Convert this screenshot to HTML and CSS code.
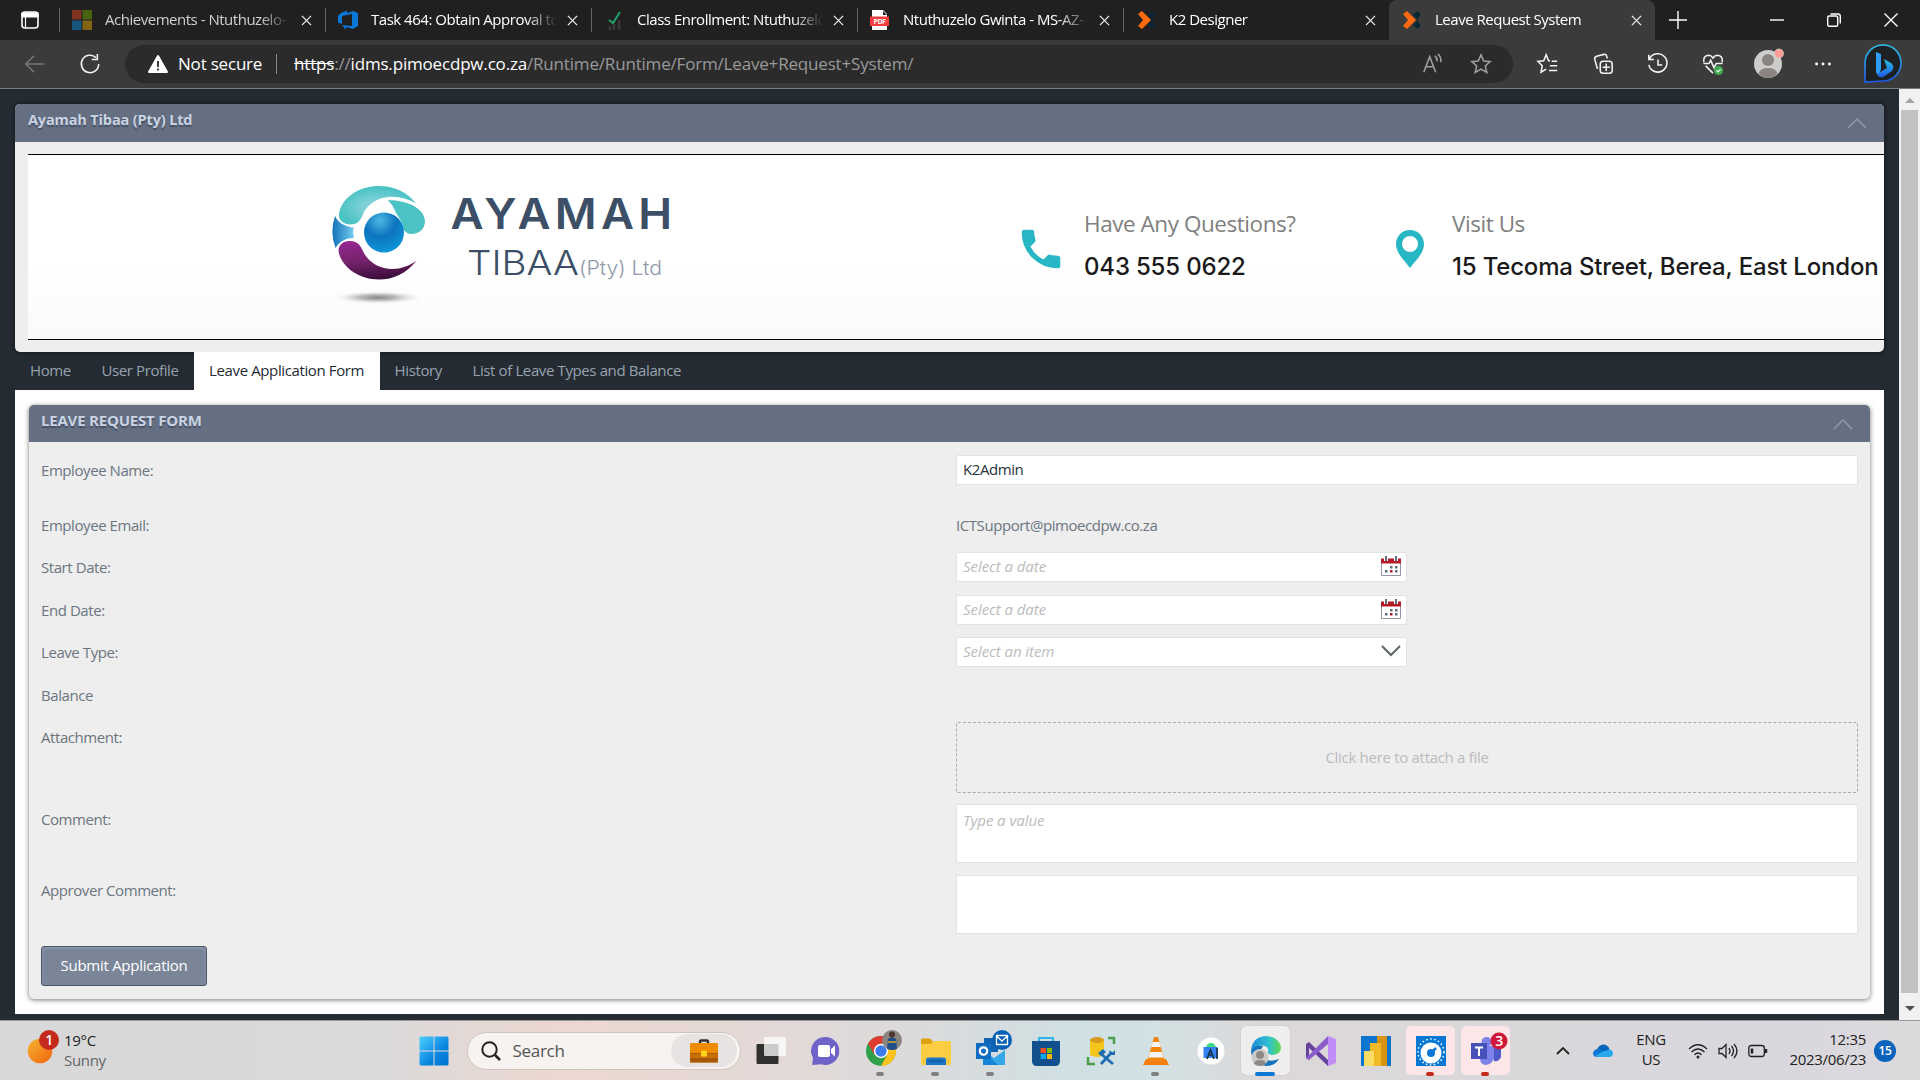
FILE: index.html
```html
<!DOCTYPE html>
<html lang="en">
<head>
<meta charset="utf-8">
<title>Leave Request System</title>
<link rel="stylesheet" href="styles.css">
</head>
<body>
<div class="screen">
  <header class="tabstrip">
    <div class="tab-menu"><svg width="20" height="20" viewBox="0 0 20 20"><rect x="2" y="2" width="16" height="16" rx="3" fill="none" stroke="#fff" stroke-width="1.6"/><path d="M2 3h16v4H2zM5.5 7v11" fill="#fff" stroke="#fff" stroke-width="1.2"/></svg></div>
    <div class="tab"><svg class="fav" viewBox="0 0 20 20"><path fill="#7d3320" d="M0 0h9.5v9.5H0z"/><path fill="#486410" d="M10.5 0H20v9.5h-9.5z"/><path fill="#17557c" d="M0 10.5h9.5V20H0z"/><path fill="#846313" d="M10.5 10.5H20V20h-9.5z"/></svg><span class="tab-title dim">Achievements - Ntuthuzelo-</span><svg class="x" viewBox="0 0 12 12"><path d="M1 1l10 10M11 1L1 11"/></svg></div>
    <div class="tab"><svg class="fav" viewBox="0 0 20 20"><path fill="#0a78d7" d="M0 6l3-3 6-2.500V3l6-2 5 2v13l-5 3-7-2v3L4 15l10 1V4L4 6v8l-4-1.500z"/></svg><span class="tab-title">Task 464: Obtain Approval to</span><svg class="x" viewBox="0 0 12 12"><path d="M1 1l10 10M11 1L1 11"/></svg></div>
    <div class="tab"><svg class="fav" viewBox="0 0 20 20"><path d="M5 10l4 3 7-11" fill="none" stroke="#21a366" stroke-width="2"/><path d="M6 20v-4M10 20v-6M15 20v-10" stroke="#383838" stroke-width="2.500"/></svg><span class="tab-title">Class Enrollment: Ntuthuzelo</span><svg class="x" viewBox="0 0 12 12"><path d="M1 1l10 10M11 1L1 11"/></svg></div>
    <div class="tab"><svg class="fav" viewBox="0 0 20 20"><path fill="#fff" d="M2 0h11l4 4v16H2z"/><path fill="#222" d="M13 1v4h4z"/><path fill="#f03e3e" d="M0 6.500h19v9.500H0z"/><text x="9.500" y="13.800" font-size="7" font-weight="700" fill="#fff" text-anchor="middle" font-family="Open Sans">PDF</text></svg><span class="tab-title">Ntuthuzelo Gwinta - MS-AZ-</span><svg class="x" viewBox="0 0 12 12"><path d="M1 1l10 10M11 1L1 11"/></svg></div>
    <div class="tab"><svg class="fav" viewBox="-2 0 20 20"><path fill="#0a2533" d="M14 1l-4 4 5 5-5 5 4 4 4-3-4-6 4-6z"/><path fill="#ff6a10" d="M0 4l4-3 9 9-9 9-4-3 5-6z"/></svg><span class="tab-title">K2 Designer</span><svg class="x" viewBox="0 0 12 12"><path d="M1 1l10 10M11 1L1 11"/></svg></div>
    <div class="tab active"><svg class="fav" viewBox="-1 0 20 20"><path fill="#0a2533" d="M14 1l-4 4 5 5-5 5 4 4 4-3-4-6 4-6z"/><path fill="#ff6a10" d="M0 4l4-3 9 9-9 9-4-3 5-6z"/></svg><span class="tab-title">Leave Request System</span><svg class="x" viewBox="0 0 12 12"><path d="M1 1l10 10M11 1L1 11"/></svg></div>
    <div class="win add"><svg width="18" height="18" viewBox="0 0 18 18"><path d="M9 0v18M0 9h18"/></svg></div>
    <div class="win"><svg width="14" height="14" viewBox="0 0 14 14"><path d="M0 7h14"/></svg></div>
    <div class="win"><svg width="14" height="14" viewBox="0 0 14 14"><rect x=".7" y="3" width="10" height="10.300" rx="1.500"/><path d="M3.500 1h7.500q2.300 0 2.300 2.500v7"/></svg></div>
    <div class="win"><svg width="14" height="14" viewBox="0 0 14 14"><path d="M.5.500l13 13M13.500.500l-13 13"/></svg></div>
  </header>

  <div class="toolbar">
    <svg class="tool back" viewBox="0 0 24 24"><path d="M22 12H3M11 3l-9 9 9 9"/></svg>
    <svg class="tool reload" viewBox="0 0 24 24"><path d="M21.500 12a9.500 9.500 0 1 1-3-7M20 1v6h-6"/></svg>
    <div class="address">
      <svg class="warn" viewBox="0 0 20 18"><path fill="#fff" stroke="#fff" stroke-width="2" stroke-linejoin="round" d="M10 1l9 16H1z"/><path d="M10 6v6M10 13.500v2" stroke="#2b2b2b" stroke-width="1.800"/></svg>
      <span class="secure">Not secure</span><i class="bar"></i>
      <span class="url"><s>https</s><em>://</em><b>idms.pimoecdpw.co.za</b><em>/Runtime/Runtime/Form/Leave+Request+System/</em></span>
      <svg class="tool grey" viewBox="0 0 24 24"><path d="M3 21L9.500 4 16 21M5.300 15h8.500M15 3q3 2.500 2.500 6M18.500 1q4 4 3 9"/></svg>
      <svg class="tool grey star" viewBox="0 0 24 24"><path d="M12 2l3 6.700 7 .7-5.300 4.800 1.600 7L12 17.500 5.700 21.200l1.600-7L2 9.400l7-.7z"/></svg>
    </div>
    <div class="tools">
      <svg class="tool" viewBox="0 0 24 24"><path d="M14 8.600l-1.300-.2L10 2 7.300 8.400l-6.300.8 4.700 4.600L4.400 21 10 17.500M16 9h6M14 14h8M13 19h9"/></svg>
      <svg class="tool" viewBox="0 0 24 24"><rect x="9" y="9" width="13" height="13" rx="3"/><path d="M15.500 11.500v8M11.500 15.500h8M6 17.500L3 7q-.5-2.500 2-3.500l8-2q2.500-.5 3 2l.8 2.500"/></svg>
      <svg class="tool" viewBox="0 0 24 24"><path d="M3 6a10 10 0 1 1-1 7M2 2v5h5.500M12 7v6h4.500"/></svg>
      <svg class="tool" viewBox="0 0 24 24"><path d="M2 10Q1 3 7 2.500q3 0 5 3 2-3 5-3 6 .5 5 7.500M1.500 11.500h6l2-3.500 3.500 8 2.500-4.500h7M4 14l8 8"/><circle cx="18" cy="19" r="5" fill="#45a853" stroke="none"/><path stroke-width="1.200" d="M15.700 19l1.700 1.700 3-3.200"/></svg>
      <svg class="tool avatar" viewBox="0 0 30 30"><circle cx="15" cy="15" r="14" fill="#cfcdcb" stroke="none"/><circle cx="15" cy="11" r="6" fill="#8a8583" stroke="none"/><path fill="#8a8583" stroke="none" d="M5.500 24.500Q7 19 15 19t9.500 5.500Q20.500 29 15 29t-9.500-4.500z"/><circle cx="26" cy="4.500" r="4.500" fill="#ff9d94" stroke="#d8d4d2" stroke-width=".7"/></svg>
      <svg class="tool" viewBox="0 0 24 24"><g fill="#fff" stroke="none"><circle cx="5" cy="12" r="1.600"/><circle cx="12" cy="12" r="1.600"/><circle cx="19" cy="12" r="1.600"/></g></svg>
      <svg class="bing" viewBox="0 0 38 38"><defs><linearGradient id="bg" x1="0" y1="0" x2="0" y2="1"><stop offset="0" stop-color="#2cc4e8"/><stop offset="1" stop-color="#2059e8"/></linearGradient></defs><path d="M1 37V18A18 18 0 1 1 19 36z" fill="#1e2123" stroke="url(#bg)" stroke-width="1.700"/><path d="M12 7l5 2v15l-2 6q-3-1-3-4z" fill="#2c9df2"/><path d="M20 14l7 4q4 3 1 8l-9 6q-4 1-6-3l10-6z" fill="url(#bg)"/></svg>
    </div>
  </div>

  <div class="viewport">
    <main class="page">
      <section class="panel company">
        <div class="panel-head"><h2>Ayamah Tibaa (Pty) Ltd</h2><svg class="chev" viewBox="0 0 20 12"><path d="M1 11l9-9 9 9"/></svg></div>
        <div class="banner">
          <svg class="logo" width="360" height="140" viewBox="320 175 360 140">
            <defs>
              <radialGradient id="ball" cx=".4" cy=".2" r=".9"><stop offset="0" stop-color="#4db8e4"/><stop offset=".45" stop-color="#0b74bf"/><stop offset="1" stop-color="#109ddd"/></radialGradient>
              <linearGradient id="plum" x1=".3" y1="0" x2=".5" y2="1"><stop offset="0" stop-color="#93278f"/><stop offset=".5" stop-color="#75226c"/><stop offset="1" stop-color="#3a0d38"/></linearGradient>
              <radialGradient id="teal" cx=".5" cy=".55" r=".5"><stop offset="0" stop-color="#9bd8e2"/><stop offset="1" stop-color="#4bc3c4"/></radialGradient>
              <linearGradient id="sky"><stop offset="0" stop-color="#1472b8"/><stop offset="1" stop-color="#74cdf2"/></linearGradient>
              <radialGradient id="shade"><stop offset="0" stop-color="#888"/><stop offset=".4" stop-color="#bbb"/><stop offset="1" stop-color="#fff" stop-opacity="0"/></radialGradient>
            </defs>
            <path fill="url(#teal)" d="M339 214C342 196 361 186 379 186C395 186 408 193 416 203.500C398 193 375 194 364 212C361 220 358 224.500 350 224.500C343 224 338 220 339 214Z"/>
            <path fill="#4bc3c4" d="M387.500 200.300C407 200 424 208 425 221C425 229 419 234 411.500 234C408 234 405 232 403.500 229.500C402 221 398 216 396 213C394 208 392 204 387.500 200.300Z"/>
            <path fill="url(#sky)" d="M335 216C339 224 345 226 353.500 227.500Q352.500 233 354 238C346 238 340 241 335.500 248Q329.500 232 335 216Z"/>
            <circle cx="384" cy="232.500" r="20" fill="url(#ball)"/>
            <path fill="url(#plum)" d="M338.500 251C338.500 244 344 241 349.500 241C360 241 361 248 364.500 254C375 271 399 274 416.500 260.500C406 274 393 279.500 379 279.500C359 279.500 341 267 338.500 251Z"/>
            <ellipse cx="378" cy="297.500" rx="47" ry="7" fill="url(#shade)"/>
            <text x="450.500" y="229.300" class="lg1" textLength="226" lengthAdjust="spacingAndGlyphs">AYAMAH</text>
            <text x="467" y="275.300" class="lg2" textLength="112" lengthAdjust="spacingAndGlyphs">TIBAA</text>
            <text x="579" y="275.300" class="lg3" textLength="83" lengthAdjust="spacingAndGlyphs">(Pty) Ltd</text>
          </svg>
          <div class="contact phone">
            <svg width="50" height="50" viewBox="0 0 24 24"><path fill="#26b6c4" d="M6.620 10.790c1.440 2.830 3.760 5.140 6.590 6.590l2.200-2.200c.27-.27.67-.36 1.020-.24 1.120.37 2.330.57 3.570.57.55 0 1 .45 1 1V20c0 .55-.45 1-1 1-9.390 0-17-7.610-17-17 0-.55.45-1 1-1h3.500c.55 0 1 .45 1 1 0 1.250.2 2.450.57 3.570.11.35.03.74-.25 1.020l-2.200 2.200z" stroke="#26b6c4" stroke-width=".5"/></svg>
            <div><p class="ask">Have Any Questions?</p><p class="val">043 555 0622</p></div>
          </div>
          <div class="contact place">
            <svg width="28" height="38" viewBox="0 0 28 38"><path fill="#26b6c4" fill-rule="evenodd" d="M14 0C6.300 0 0 6.200 0 14c0 10 10 18 14 24 4-6 14-14 14-24C28 6.200 21.700 0 14 0zm0 6a8 8 0 1 1 0 16 8 8 0 0 1 0-16z"/></svg>
            <div><p class="ask">Visit Us</p><p class="val">15 Tecoma Street, Berea, East London</p></div>
          </div>
        </div>
      </section>

      <nav class="nav"><a>Home</a><a>User Profile</a><a class="current">Leave Application Form</a><a>History</a><a>List of Leave Types and Balance</a></nav>

      <div class="sheet">
        <section class="panel request">
          <div class="panel-head"><h2 class="caps">LEAVE REQUEST FORM</h2><svg class="chev" viewBox="0 0 20 12"><path d="M1 11l9-9 9 9"/></svg></div>
          <div class="form">
            <div class="row r56"><label>Employee Name:</label><div class="field full"><span>K2Admin</span></div></div>
            <div class="row r41"><label>Employee Email:</label><span class="mail">ICTSupport@pimoecdpw.co.za</span></div>
            <div class="row r43"><label>Start Date:</label><div class="field"><span class="ph">Select a date</span><svg class="cal" viewBox="0 0 20 20"><path fill="#fff" stroke="#8f97a8" d="M.5 5h19v14.500H.5z"/><path fill="#b31b28" d="M0 2.500h20v5H0z"/><path stroke="#fff" stroke-width="4" d="M5 0v5M15 0v5"/><path stroke="#656f82" stroke-width="2" d="M5 0v5M15 0v5"/><path fill="#656f82" d="M9 10h2.500v2.500H9zM14 10h2.500v2.500H14zM4 14h2.500v2.500H4zM14 14h2.500v2.500H14z"/><path fill="#b31b28" d="M9 14h2.500v2.500H9z"/></svg></div></div>
            <div class="row r42"><label>End Date:</label><div class="field"><span class="ph">Select a date</span><svg class="cal" viewBox="0 0 20 20"><path fill="#fff" stroke="#8f97a8" d="M.5 5h19v14.500H.5z"/><path fill="#b31b28" d="M0 2.500h20v5H0z"/><path stroke="#fff" stroke-width="4" d="M5 0v5M15 0v5"/><path stroke="#656f82" stroke-width="2" d="M5 0v5M15 0v5"/><path fill="#656f82" d="M9 10h2.500v2.500H9zM14 10h2.500v2.500H14zM4 14h2.500v2.500H4zM14 14h2.500v2.500H14z"/><path fill="#b31b28" d="M9 14h2.500v2.500H9z"/></svg></div></div>
            <div class="row r43"><label>Leave Type:</label><div class="field"><span class="ph">Select an item</span><svg class="cal" viewBox="0 0 20 20"><path d="M1 5l9 9 9-9" fill="none" stroke="#5f6668" stroke-width="2"/></svg></div></div>
            <div class="row r42"><label>Balance</label></div>
            <div class="row r82"><label>Attachment:</label><div class="attach">Click here to attach a file</div></div>
            <div class="row r71"><label>Comment:</label><div class="area"><span class="ph">Type a value</span></div></div>
            <div class="row r71"><label>Approver Comment:</label><div class="area"></div></div>
            <button class="submit">Submit Application</button>
          </div>
        </section>
      </div>
    </main>
    <aside class="scroll"><svg viewBox="0 0 10 6"><path fill="#a3a3a3" d="M0 6l5-5 5 5z"/></svg><div class="thumb"></div><svg viewBox="0 0 10 6"><path fill="#505050" d="M0 0l5 5 5-5z"/></svg></aside>
  </div>

  <footer class="taskbar">
    <div class="weather"><svg width="34" height="36" viewBox="0 0 34 36"><defs><linearGradient id="sun" x1="0" y1="0" x2="1" y2="1"><stop offset="0" stop-color="#f2b632"/><stop offset="1" stop-color="#f5620f"/></linearGradient></defs><circle cx="13" cy="22" r="12.300" fill="url(#sun)"/><circle cx="22" cy="11" r="10" fill="#c42b1c"/><text x="22" y="16" class="one">1</text></svg><div><p>19°C</p><p class="soft">Sunny</p></div></div>
    <div class="app"><svg viewBox="0 0 30 30"><defs><linearGradient id="win" x1="0" y1="0" x2="1" y2="1"><stop offset="0" stop-color="#4cd0ff"/><stop offset=".6" stop-color="#0a86e0"/><stop offset="1" stop-color="#0072d0"/></linearGradient></defs><path fill="url(#win)" d="M1.500.500h13v14h-14v-13zM15.500.500h13l1 1v13h-14zM.5 15.500h14v14h-13l-1-1zM15.500 15.500h14v13l-1 1h-13z"/></svg></div>
    <div class="search"><svg width="20" height="20" viewBox="0 0 20 20"><circle cx="8.500" cy="8.500" r="7.200" fill="none" stroke="#222" stroke-width="2"/><path d="M14 14l5 5" stroke="#222" stroke-width="2.500"/></svg><span>Search</span><div class="bag"><svg width="28" height="24" viewBox="0 0 28 24"><path d="M10 5V2.500q0-1 1-1h6q1 0 1 1V5" fill="none" stroke="#333" stroke-width="2.500"/><rect y="4" width="28" height="19.500" rx="1.500" fill="#ee8b00"/><path fill="#a65a08" d="M0 14h28v9.500H0z"/><path fill="#c87000" d="M0 15h28v4H0z"/><path fill="#ffd21f" d="M11 11.500h6v6h-6z"/></svg></div></div>
    <div class="apps">
      <div class="app"><svg viewBox="0 0 30 30"><rect x=".5" y="8" width="22" height="20" rx="1" fill="#30312e"/><rect x="8" y="1" width="22" height="19" rx="1" fill="#fff" opacity=".75"/></svg></div>
      <div class="app"><svg viewBox="0 0 30 30"><path fill="#6f63c7" d="M15 1a14 14 0 1 1-5 27.300L1 29l1-7A14 14 0 0 1 15 1z"/><rect x="7" y="9" width="12" height="12" rx="2" fill="#fff"/><path fill="#fff" d="M20 13l4-3.500v11L20 17z"/></svg></div>
      <div class="app run"><svg viewBox="0 0 30 30"><circle cx="15" cy="15" r="15" fill="#30a04b"/><path fill="#fcc31e" d="M28 7.500A15 15 0 0 1 15 30l6.500-12L15 7.500z"/><path fill="#e13b30" d="M2 7.500A15 15 0 0 1 28 7.500H15L8.500 19z"/><circle cx="15" cy="15" r="7.200" fill="#fff"/><circle cx="15" cy="15" r="5.700" fill="#3b7ded"/><circle cx="26" cy="4" r="10" fill="#8b8580"/><path fill="#1e4e8c" d="M21 13l1-10 4-2 4 2 1 10q-5 2-10 0z"/><circle cx="26" cy="-1.500" r="3" fill="#4f372c"/><path d="M22 6h8" stroke="#d6ad28" stroke-width="1.500"/></svg></div>
      <div class="app run"><svg viewBox="0 0 30 30"><path fill="#dda20c" d="M0 4q0-1.500 1.500-1.500H9l3 3-2 4H0z"/><path fill="#fccd42" d="M0 8h10l3-3h15.500Q30 5 30 6.500v21.500q0 1-1 1H1q-1 0-1-1z"/><path fill="#1b74c5" d="M5 29v-5q0-2.500 2.500-2.500h15Q25 21.500 25 24v5z"/><path stroke="#0c4a84" d="M8 25h14"/></svg></div>
      <div class="app run"><svg viewBox="0 0 30 30"><path fill="#1066b5" d="M8 2h14v14H8z"/><path fill="#35a8ea" d="M7 14l11 8 11-8v15H7z"/><path fill="#1482d6" d="M7 15l15 14H7z"/><path fill="#0f6cc0" d="M0 7h15v16H0z"/><circle cx="7.500" cy="15" r="3.700" fill="none" stroke="#fff" stroke-width="2.300"/><circle cx="26" cy="4" r="10" fill="#0560b5"/><path fill="none" stroke="#fff" stroke-width="1.300" d="M20.500-.5h11v9h-11zM20.500 0l5.500 5 5.500-5"/></svg></div>
      <div class="app"><svg viewBox="0 0 30 30"><path fill="none" stroke="#2fb5ea" stroke-width="2" d="M8 6V2h14v4"/><path fill="#11508c" d="M1 5h28v20q0 5-5 5H6q-5 0-5-5z"/><path fill="#f25022" d="M9.500 12H15v5H9.500z"/><path fill="#7fba00" d="M16 12h5v5h-5z"/><path fill="#00a4ef" d="M9.500 18H15v5H9.500z"/><path fill="#ffb900" d="M16 18h5v5h-5z"/></svg></div>
      <div class="app"><svg viewBox="0 0 30 30"><path fill="#f4c61c" d="M4 3h14v16q-7 4-14 0z"/><ellipse cx="11" cy="4" rx="7" ry="3" fill="#d99a22"/><path fill="none" stroke="#4c9e4c" stroke-width="2.500" d="M22 2h6v6M2 21v7h7"/><path stroke="#1f6cb3" stroke-width="2.700" fill="none" d="M15 28l11-12M14 17l13 11"/><path fill="#1f6cb3" d="M12 17l5-4 3 3-5 4zM23 14l3 3 3-3v5h-5z"/></svg></div>
      <div class="app run"><svg viewBox="0 0 30 30"><path fill="#f57c0a" d="M5 23h20l3 6H2z"/><path fill="#f0850f" d="M13 1h4l7 25H6z"/><path fill="#f4f4f4" d="M11.700 6h6.600l1.500 5h-9.600zM9 16h12l1.500 5.500h-15z"/></svg></div>
      <div class="app"><svg viewBox="0 0 30 30"><circle cx="15" cy="15" r="13.500" fill="#fff"/><path fill="#3ddc84" d="M10 12a5 5 0 0 1 10 0z"/><path fill="#3483f0" d="M7.500 11h14v11h-14z"/><path d="M11 23l3.500-9 3.500 9M12 19h5M21 12v11" stroke="#14324a" stroke-width="1.700" fill="none"/></svg></div>
      <div class="app focused"><svg viewBox="0 0 30 30"><defs><linearGradient id="edge"><stop offset="0" stop-color="#1c8bd8"/><stop offset=".6" stop-color="#30c1cf"/><stop offset="1" stop-color="#62d94e"/></linearGradient></defs><path fill="url(#edge)" d="M0 15Q1 1 15 0q14 1 15 12-1 7-9 7-5-1-4-4 1-3-3-5-7-2-14 5z"/><path fill="#1573bd" d="M0 15Q3 9 12 10q-4 5 0 12 6 5 16 1-4 7-13 7Q1 28 0 15z"/><circle cx="9" cy="21.500" r="8.500" fill="#cbcac7"/><circle cx="9" cy="19" r="4" fill="#8d8987"/><path fill="#8d8987" d="M3 28q0-4 6-4t6 4q-6 4-12 0z"/></svg></div>
      <div class="app"><svg viewBox="0 0 30 30"><path fill="#67429c" d="M0 8l3-2 19 18v6L3 12v12l-3-2z"/><path fill="#8b5ccb" d="M0 22L22 0v8L3 24z"/><path fill="#c08cf5" d="M22 0l8 3v24l-8 3z"/></svg></div>
      <div class="app"><svg viewBox="0 0 30 30"><path fill="#0c76cf" d="M0 0h30v30H0z"/><path fill="#d89312" d="M16 0h10v30H16z"/><path fill="#efba25" d="M9 7h11v23H9z"/><path fill="#f9dc63" d="M3 15h10v15H3z"/></svg></div>
      <div class="app alert"><svg viewBox="0 0 30 30"><path fill="#0878d4" d="M0 0h30v30H0z"/><circle cx="15" cy="16" r="13" fill="none" stroke="#fff" stroke-width="1.500" stroke-dasharray="1.500 2.500"/><circle cx="15" cy="17" r="10.500" fill="#fff"/><circle cx="15" cy="17" r="4" fill="#0878d4"/><path stroke="#0878d4" stroke-width="2.500" d="M15 17l5-5"/></svg></div>
      <div class="app alert"><svg viewBox="0 0 30 30"><circle cx="15.500" cy="6" r="5" fill="#7b83eb"/><path fill="#5059c9" d="M20 11h10v10q-2 5-7 4z"/><path fill="#7b83eb" d="M9 10h14v12q-2 7-9 7-5-1-5-7z"/><path fill="#4650b8" d="M0 7h16v16H0z"/><path stroke="#fff" stroke-width="2" d="M4 11.500h8M8 11v9"/><circle cx="28" cy="5" r="8.500" fill="#cf1739"/><text x="28" y="10" class="three">3</text></svg></div>
    </div>
    <div class="tray">
      <svg class="up" width="14" height="8" viewBox="0 0 14 8"><path d="M1 7l6-6 6 6"/></svg>
      <svg class="cloud" width="20" height="14" viewBox="0 0 20 14"><path fill="#0364b8" d="M3 8Q5 1 10 .5q5 0 6.500 5L14 9z"/><path fill="#0f78d4" d="M0 9q1-4 5-4 3 0 6 3l-6 5H4Q0 13 0 9z"/><path fill="#28a8ea" d="M2 12l9-5 6-1.500q3 1 3 4-.5 3.500-4 3.500H4z"/></svg>
      <div class="lang"><p>ENG</p><p>US</p></div>
      <svg class="ic wifi" viewBox="0 0 20 16"><path d="M1 6q9-8.500 18 0M3.500 9q6.500-6 13 0M6.500 11.700q3.500-3.500 7 0"/><circle cx="10" cy="14" r="1.500" fill="#222" stroke="none"/></svg>
      <svg class="ic vol" viewBox="0 0 20 16"><path d="M1 5.500h3l4-4v13l-4-4H1zM11 5q2 3 0 6M13.500 3q4 5 0 10M16 1q6 7 0 14"/></svg>
      <svg class="ic bat" viewBox="0 0 20 16"><rect x=".8" y="2.500" width="15.500" height="11" rx="2.500"/><path d="M18 6v4M4 5.500v5" stroke-width="2.500"/></svg>
      <div class="clock"><p>12:35</p><p>2023/06/23</p></div>
      <span class="count">15</span>
    </div>
  </footer>
</div>
</body>
</html>
```
FILE: styles.css
```css
* { box-sizing: border-box; }
body { margin: 0; font-family: "Open Sans", "Noto Sans", sans-serif; font-size: 15px; overflow: hidden; }
p, h2 { margin: 0; }
svg { display: block; flex: none; overflow: visible; }
.screen { width: 1920px; height: 1080px; display: flex; flex-direction: column; }

.tabstrip { height: 40px; background: #202020; display: flex; }
.tab-menu { width: 59px; padding: 10px 0 0 20px; }
.tab { width: 266px; height: 40px; display: flex; align-items: center; position: relative; padding: 0 13px; color: #fff; font-size: 15px; letter-spacing: -0.48px; }
.tab::before { content: ""; width: 1px; height: 24px; background: #666; position: absolute; left: 0; top: 8px; }
.fav { width: 20px; height: 20px; margin-right: 13px; }
.tab-title { flex: none; width: 186px; overflow: hidden; white-space: nowrap; padding-bottom: 2px; margin-right: 10px; -webkit-mask-image: linear-gradient(90deg, #000 155px, transparent 186px); }
.dim { color: #d0d0d0; }
.x { width: 11px; height: 11px; }
.x path { stroke: #eee; stroke-width: 1.4; }
.tab.active { background: #3b3b3b; border-radius: 8px 8px 0 0; }
.tab.active::before { display: none; }
.win { width: 57px; display: flex; align-items: center; justify-content: center; }
.win.add { width: 45px; margin-right: 48px; }
.win path, .win rect { fill: none; stroke: #fff; stroke-width: 1.4; }

.toolbar { height: 49px; background: #3b3b3b; border-bottom: 1px solid #7b7b7b; display: flex; align-items: center; padding-left: 24px; }
.tool { width: 22px; height: 22px; fill: none; stroke: #f2f2f2; stroke-width: 1.7; }
.back { stroke: #777; margin-right: 33px; }
.address { margin-left: 24px; width: 1388px; height: 38px; border-radius: 19px; background: #2b2b2b; display: flex; align-items: center; padding-left: 23px; color: #fff; font-size: 17px; }
.warn { width: 20px; height: 18px; margin-right: 10px; }
.secure { width: 98px; letter-spacing: -0.2px; padding-bottom: 2px; }
.bar { width: 1px; height: 20px; background: #888; margin-right: 17px; }
.url { white-space: nowrap; width: 1127px; letter-spacing: -0.18px; padding-bottom: 2px; }
.url b { font-weight: 400; }
.url em { font-style: normal; color: #9a9a9a; }
.grey { stroke: #a0a0a0; }
.star { margin-left: 27px; }
.tools { display: flex; align-items: center; padding-left: 24px; gap: 33px; }
.avatar { width: 30px; height: 30px; margin: 0 -4px; }
.bing { width: 38px; height: 38px; margin-left: -3px; }

.viewport { height: 931px; display: flex; background: #242b33; }
.page { width: 1899px; padding: 15px 0 0 15px; }
.panel { background: #eee; border-radius: 5px; }
.panel-head { height: 38px; background: #656f82; border-radius: 5px 5px 0 0; display: flex; justify-content: space-between; padding: 6px 17px 0 13px; }
.panel-head h2 { font-size: 14.5px; line-height: 20px; font-weight: 700; color: #c9d3e3; letter-spacing: -0.14px; text-shadow: 0 2px 1px #475063; }
.panel-head h2.caps { font-size: 15px; letter-spacing: -0.2px; line-height: 18px; }
.chev { width: 20px; height: 12px; margin-top: 7px; fill: none; stroke: #909aaa; stroke-width: 1.5; }
.company { width: 1869px; height: 248px; box-shadow: 0 0 4px #111; }
.banner { margin: 12px 0 0 13px; height: 186px; border: solid #000; border-width: 1px 0; background: linear-gradient(#fff 60%, #fafafa); display: flex; }
.logo { margin: 20px 0 0 292px; font-family: Inter, sans-serif; }
.lg1 { font-size: 42px; font-weight: 600; fill: #3d4f67; letter-spacing: 4px; }
.lg2 { font-size: 34.5px; font-weight: 300; fill: #3d4f67; }
.lg3 { font-size: 20px; font-weight: 300; fill: #8f99aa; }
.contact { display: flex; white-space: nowrap; }
.phone { margin-left: 336px; width: 380px; }
.phone svg { margin-top: 69px; }
.phone > div { margin-left: 18px; }
.place svg { margin-top: 75px; }
.place > div { margin-left: 28px; }
.ask { margin-top: 52px; font-size: 22.5px; line-height: 34px; color: #808080; font-weight: 400; letter-spacing: -0.45px; }
.val { font-family: Inter, sans-serif; font-weight: 500; font-size: 24px; line-height: 34px; margin-top: 9px; color: #1a1a1a; letter-spacing: -0.18px; }

.nav { display: flex; height: 38px; }
.nav a { padding: 0 15.5px 0 15px; line-height: 37px; color: #98a2ad; letter-spacing: -0.38px; white-space: nowrap; }
.nav a.current { background: #fff; color: #242b33; }
.sheet { width: 1869px; height: 624px; background: #fff; padding: 15px 14px; }
.request { height: 594px; box-shadow: 0 1px 5px #777; }
.request .panel-head { height: 37px; padding-left: 12px; padding-right: 17px; }
.form { padding: 7px 12px 0; color: #6b7581; letter-spacing: -0.43px; }
.row { display: grid; grid-template-columns: 915px 1fr; align-items: start; padding-top: 6px; }
.row label, .mail { line-height: 30px; }
.r41 { height: 41px; } .r42 { height: 42px; } .r43 { height: 43px; } .r56 { height: 56px; } .r71 { height: 71px; } .r82 { height: 82px; }
.r41 label, .mail { line-height: 28px; }
.field { width: 451px; height: 30px; background: #fff; border: 1px solid #e2e2e2; border-radius: 2px; display: flex; align-items: center; justify-content: space-between; padding: 0 5px 2px 6px; color: #2b333b; }
.field.full { width: 902px; }
.ph { font-style: italic; color: #bbb; letter-spacing: -0.06px; }
.cal { width: 20px; height: 20px; }
.attach { width: 902px; height: 71px; border: 1px dashed #aaa; border-radius: 2px; text-align: center; line-height: 68px; color: #bbb; letter-spacing: -0.3px; }
.area { width: 902px; height: 59px; background: #fff; border: 1px solid #e2e2e2; padding: 5px 6px; }
.submit { display: block; margin-top: 6px; width: 166px; height: 40px; background: #7a8598; border: 1px solid #4b5768; border-radius: 3px; color: #fff; font: inherit; letter-spacing: -0.27px; white-space: nowrap; padding: 0 0 2px; box-shadow: inset 0 1px 3px #93a0b3; }

.scroll { width: 21px; background: #f1f1f1; display: flex; flex-direction: column; align-items: center; justify-content: space-between; padding: 8px 0; }
.scroll svg { width: 10px; height: 6px; }
.thumb { width: 17px; height: 883px; background: #c1c1c1; margin-bottom: 7px; }

.taskbar { height: 60px; border-top: 1px solid #999; display: flex; align-items: center; color: #222; letter-spacing: -0.3px;
  background: linear-gradient(90deg, #d8d8d8 0, #dbd9da 380px, #ecd8d0 560px, #e4d9d7 760px, #dcdadb 900px, #cfe0e3 1080px, #d2e2e4 1150px, #dcd8da 1260px, #dad8da 1500px, #d9d7de 1780px, #dcdadc 1920px); }
.weather { width: 406.5px; padding-left: 27px; display: flex; line-height: 20px; }
.weather > div { margin: -2px 0 0 3px; }
.weather svg { margin-top: -3px; }
.soft { color: #666; }
.one, .three { fill: #fff; font-size: 14px; text-anchor: middle; font-weight: 600; }
.app { width: 55px; height: 60px; display: flex; align-items: center; justify-content: center; position: relative; }
.app svg { width: 30px; height: 30px; z-index: 1; }
.search { margin: 0 2.5px 0 5px; width: 274px; height: 38px; border-radius: 19px; background: #f7f3f1; border: 1px solid #cfc4c0; display: flex; align-items: center; padding: 0 3px 0 13px; font-size: 17px; color: #555; }
.search span { margin-left: 12px; flex: 1; letter-spacing: -0.3px; }
.bag { width: 66px; height: 33px; border-radius: 17px; background: #e7e3e2; display: flex; align-items: center; justify-content: center; }
.apps { display: flex; }
.run::after, .focused::after, .alert::after { content: ""; position: absolute; bottom: 5px; left: 23px; width: 8px; height: 4px; border-radius: 2px; background: #808080; }
.focused::after { left: 17px; width: 20px; background: #0a78d4; }
.alert::after { background: #c42b1c; }
.focused::before, .alert::before { content: ""; position: absolute; left: 3px; right: 3px; top: 5px; bottom: 6px; border-radius: 5px; background: #efeeee; box-shadow: 0 0 1px #999; }
.alert::before { background: #fce6e7; box-shadow: none; }
.tray { display: flex; align-items: center; flex: 1; padding-left: 43px; line-height: 20px; }
.up { fill: none; stroke: #222; stroke-width: 1.8; }
.cloud { margin-left: 23px; }
.lang { width: 50px; margin: -3px 0 0 13px; text-align: center; }
.ic { width: 20px; height: 16px; fill: none; stroke: #222; stroke-width: 1.3; }
.wifi { margin-left: 12px; }
.vol, .bat { margin-left: 10px; }
.clock { flex: 1; text-align: right; margin-top: -4px; }
.count { width: 22px; height: 22px; border-radius: 11px; background: #0a63bd; color: #fff; font-size: 12px; font-weight: 600; text-align: center; line-height: 21px; margin: 0 24px 0 8px; }
```
